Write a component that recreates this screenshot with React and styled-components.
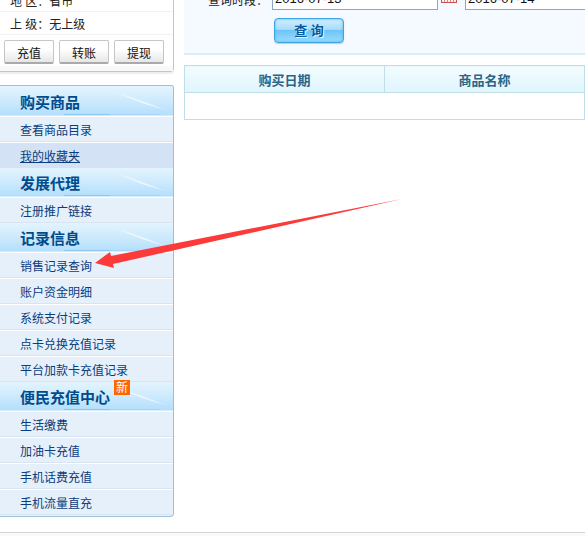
import styled, {createGlobalStyle} from "styled-components";

const GlobalStyle = createGlobalStyle`
  * {
    box-sizing: border-box;
  }

  body {
    margin: 0;
    background: #ffffff;
    color: #222222;
    font-family: "Liberation Sans", "Noto Sans CJK SC", sans-serif;
    font-size: 12px;
    overflow: hidden;
  }
`

const Page = styled.div`
  position: relative;
  min-height: 100vh;
  display: flex;
  flex-direction: column;
`

const Columns = styled.div`
  display: flex;
  align-items: flex-start;
  gap: 10px;
  padding-bottom: 15px;
`

const Sidebar = styled.aside`
  flex: 0 0 174px;
  display: flex;
  flex-direction: column;
  gap: 13px;
`

const Account = styled.section`
  border-right: 1px solid #a9cde0;
  border-bottom: 1px solid #a9cde0;
  border-bottom-right-radius: 4px;
  box-shadow: 0 2px 1px #eeeeee;
`

const AccountRow = styled.div`
  height: ${(p) => (p.$cut ? "12px" : "23px")};
  padding-left: 10px;
  overflow: hidden;
  display: flex;
  align-items: flex-end;
  line-height: 18px;
  border-bottom: 1px solid #f2f2f2;
`

const AccountButtons = styled.div`
  display: flex;
  gap: 5px;
  padding: 5px 4px 2px;
  border-bottom: 5px solid #f8f8f8;
`

const AccountButton = styled.button`
  width: 50px;
  height: 24px;
  padding: 2px 0 0;
  border: 1px solid #c6c6c6;
  border-bottom: 2px solid #aaaaaa;
  border-radius: 2px;
  background: linear-gradient(#ffffff 40%, #e6e6e6);
  color: #111111;
  font: inherit;
`

const Menu = styled.nav`
  padding: 1px 0;
  border: 1px solid #9dbfd9;
  border-left: 0;
  border-radius: 0 3px 4px 0;
  background: #e1f3fe;
  overflow: hidden;
`

const MenuHeading = styled.h2`
  position: relative;
  height: 29px;
  margin: 0;
  padding-left: 20px;
  border-bottom: 1px solid #d6ecfb;
  background: linear-gradient(#e3f4fe, #cdeafd 50%, #b3dffc);
  color: #004b8c;
  font-size: 15px;
  line-height: 31px;
`

const Shine = styled.svg`
  position: absolute;
  right: 0;
  bottom: 0;
`

const NewBadge = styled.span`
  position: absolute;
  top: -2px;
  left: 114px;
  width: 16px;
  height: 15px;
  background: #ff6600;
  color: #ffffff;
  font-size: 12px;
  font-weight: normal;
  line-height: 17px;
  text-align: center;
`

const MenuList = styled.ul`
  margin: 0;
  padding: 0;
  list-style: none;
`

const MenuLink = styled.a`
  display: block;
  height: 26px;
  padding-left: 20px;
  border-top: 1px solid #ffffff;
  border-bottom: 1px solid ${(p) => (p.$active ? "#d3e3f5" : "#d7e4f2")};
  background: ${(p) => (p.$active ? "#d3e3f5" : "#e6f0fb")};
  color: #0a3d7c;
  line-height: 28px;
  text-decoration: ${(p) => (p.$active ? "underline" : "none")};
  text-underline-offset: 1px;
`

const Main = styled.main`
  flex: 1;
  min-width: 0;
  display: flex;
  flex-direction: column;
  gap: 10px;
`

const Search = styled.form`
  height: 55px;
  border-bottom: 2px solid #d9eefa;
  background: #f4faff;
`

const Period = styled.div`
  height: 10px;
  padding-left: 24px;
  display: flex;
  align-items: flex-end;
  overflow: hidden;
`

const PeriodLabel = styled.label`
  flex: 0 0 64px;
  line-height: 18px;
  white-space: nowrap;
`

const DateInput = styled.input`
  flex: 0 0 166px;
  min-width: 0;
  height: 24px;
  padding: 0 2px;
  border: 1px solid #8aa9c0;
  background: #ffffff;
  color: #111111;
  font: 13px "Liberation Sans", sans-serif;
`

const Calendar = styled.svg`
  flex: 0 0 16px;
  margin: 0 8px 7px 3px;
`

const SearchButton = styled.button`
  display: block;
  width: 70px;
  height: 25px;
  margin: 8px 0 0 90px;
  padding: 0 0 2px;
  border: 1px solid #3fa5e2;
  border-radius: 4px;
  background: linear-gradient(#d3effe, #a9dcfb 45%, #6ec4f8 50%, #9bdbff);
  box-shadow: inset 0 0 3px #4fb4f0, 0 1px 1px #b5cfdf;
  color: #075a9e;
  font: bold 13px "Liberation Sans", "Noto Sans CJK SC", sans-serif;
  text-shadow: 1px 1px 0 #dff4ff;
`

const Table = styled.table`
  width: 100%;
  border-collapse: collapse;
  table-layout: fixed;
`

const HeadCell = styled.th`
  height: 27px;
  padding: 0;
  border: 1px solid #bfdee8;
  background: linear-gradient(#f3fcff, #dff5fd);
  color: #2a6488;
  font-size: 13px;
`

const EmptyCell = styled.td`
  height: 27px;
  padding: 0;
  border: 1px solid #bfdee8;
`

const Footer = styled.footer`
  flex: 1;
  border-top: 1px solid #d6d6d6;
  background: #fafafa;
`

const Arrow = styled.svg`
  position: absolute;
  top: 199px;
  left: 95px;
  pointer-events: none;
`

const sections = [
    {title: "购买商品", links: ["查看商品目录", "我的收藏夹"]},
    {title: "发展代理", links: ["注册推广链接"]},
    {title: "记录信息", links: ["销售记录查询", "账户资金明细", "系统支付记录", "点卡兑换充值记录", "平台加款卡充值记录"]},
    {title: "便民充值中心", isNew: true, links: ["生活缴费", "加油卡充值", "手机话费充值", "手机流量直充"]}
]

const CalendarIcon = () => (
    <Calendar width="16" height="14" viewBox="0 0 16 14" aria-hidden="true">
        <rect width="16" height="14" fill="#c75050"/>
        <path d="M1 4h14v9H1z" fill="#fff0ee"/>
        <path d="M3.5 4v9M6.5 4v9M9.5 4v9M12.5 4v9M1 6.5h14M1 9.5h14" stroke="#dd8a86"/>
    </Calendar>
)

const MenuSection = ({section}) => (
    <>
        <MenuHeading>
            {section.title}
            <Shine width="115" height="28" viewBox="0 0 115 28" aria-hidden="true">
                <path d="M58 6Q76 8 104 22Q84 17 58 6Z" fill="#ffffff" opacity="0.2"/>
                <path d="M60 6L111 24L84 16Z" fill="#ffffff" opacity="0.6"/>
                <path d="M6 27.5h46" stroke="#8cc8f0"/>
                <path d="M52 27.5h50" stroke="#a6d7f8"/>
            </Shine>
            {section.isNew && <NewBadge>新</NewBadge>}
        </MenuHeading>
        <MenuList>
            {section.links.map((link) =>
                <li key={link}>
                    <MenuLink href="#" $active={link === "我的收藏夹"}>{link}</MenuLink>
                </li>
            )}
        </MenuList>
    </>
)

const App = () => {
    return (
        <Page>
            <GlobalStyle/>
            <Columns>
                <Sidebar>
                    <Account>
                        <AccountRow $cut>地 区：省市</AccountRow>
                        <AccountRow>上 级：无上级</AccountRow>
                        <AccountButtons>
                            <AccountButton type="button">充值</AccountButton>
                            <AccountButton type="button">转账</AccountButton>
                            <AccountButton type="button">提现</AccountButton>
                        </AccountButtons>
                    </Account>
                    <Menu>
                        {sections.map((section) =>
                            <MenuSection key={section.title} section={section}/>
                        )}
                    </Menu>
                </Sidebar>
                <Main>
                    <Search>
                        <Period>
                            <PeriodLabel htmlFor="from">查询时段：</PeriodLabel>
                            <DateInput id="from" type="text" defaultValue="2016-07-13"/>
                            <CalendarIcon/>
                            <DateInput type="text" aria-label="查询时段" defaultValue="2016-07-14"/>
                        </Period>
                        <SearchButton type="button">查 询</SearchButton>
                    </Search>
                    <Table>
                        <thead>
                            <tr>
                                <HeadCell>购买日期</HeadCell>
                                <HeadCell>商品名称</HeadCell>
                            </tr>
                        </thead>
                        <tbody>
                            <tr>
                                <EmptyCell colSpan={2}/>
                            </tr>
                        </tbody>
                    </Table>
                </Main>
            </Columns>
            <Footer/>
            <Arrow width="308" height="70" viewBox="0 0 308 70" aria-hidden="true">
                <path d="M0 64L15 53L16 57L307 0L18 65L19 69Z" fill="#fd3a3a"/>
            </Arrow>
        </Page>
    )
}

export default App
